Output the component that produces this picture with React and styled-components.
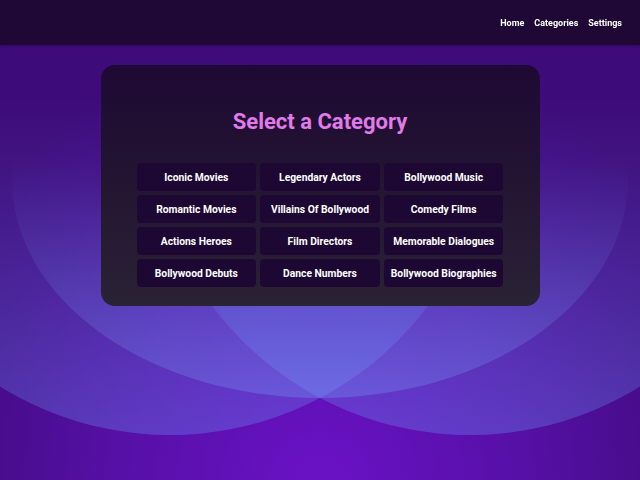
import React from 'react'
import styled, { createGlobalStyle } from 'styled-components'

const GlobalStyle = createGlobalStyle`
    html, body {
        margin: 0;
        padding: 0;
        height: 100%;
    }
    body {
        font-family: Roboto, "Liberation Sans", sans-serif;
        background: radial-gradient(ellipse 70% 90% at 50% 100%, #6a12c6 0%, #5610a6 45%, #440c86 80%, #3e0b7a 100%);
        background-color: #440c86;
        min-height: 480px;
        overflow: hidden;
    }
`

const Page = styled.div`
    position: relative;
    min-height: 480px;
    display: flex;
    flex-direction: column;
`

const Backdrop = styled.svg`
    position: fixed;
    left: 0;
    top: 0;
    width: 640px;
    height: 480px;
    z-index: 0;
    pointer-events: none;
`

const Header = styled.header`
    position: relative;
    z-index: 1;
    height: 45px;
    background-color: #1f0836;
    display: flex;
    align-items: center;
    justify-content: flex-end;
    padding-right: 18px;
    box-shadow: 0 1px 3px rgba(0, 0, 0, 0.25);
`

const Nav = styled.nav`
    display: flex;
    gap: 10px;
`

const NavLink = styled.a`
    color: #fff;
    font-size: 9px;
    font-weight: 700;
    text-decoration: none;
    cursor: pointer;
`

const Main = styled.main`
    position: relative;
    z-index: 1;
    display: flex;
    justify-content: center;
    padding-top: 20px;
`

const Card = styled.section`
    width: 439px;
    box-sizing: border-box;
    padding: 42px 36px 19px;
    border-radius: 14px;
    background: linear-gradient(to bottom, #1e0934 0%, #241532 50%, #2a2235 100%);
`

const Title = styled.h1`
    margin: 0 0 26px;
    text-align: center;
    font-size: 22px;
    line-height: 30px;
    font-weight: 700;
    color: #e07be9;
`

const Grid = styled.div`
    display: grid;
    grid-template-columns: repeat(3, 1fr);
    gap: 4px;
`

const CategoryButton = styled.button`
    height: 28px;
    border: none;
    border-radius: 4px;
    background-color: #1d0733;
    color: #fff;
    font-family: Roboto, "Liberation Sans", sans-serif;
    font-size: 10.3px;
    font-weight: 700;
    padding: 0;
    cursor: pointer;
    white-space: nowrap;
`

const categories = [
    'Iconic Movies', 'Legendary Actors', 'Bollywood Music',
    'Romantic Movies', 'Villains Of Bollywood', 'Comedy Films',
    'Actions Heroes', 'Film Directors', 'Memorable Dialogues',
    'Bollywood Debuts', 'Dance Numbers', 'Bollywood Biographies',
]

const Circles = () => (
    <Backdrop viewBox="0 0 640 480" preserveAspectRatio="none">
        <defs>
            <linearGradient id="sideFade" gradientUnits="userSpaceOnUse" x1="0" y1="90" x2="0" y2="435">
                <stop offset="0" stopColor="#6ea0ff" stopOpacity="0" />
                <stop offset="1" stopColor="#6ea0ff" stopOpacity="0.3" />
            </linearGradient>
            <linearGradient id="midFade" gradientUnits="userSpaceOnUse" x1="0" y1="160" x2="0" y2="398">
                <stop offset="0" stopColor="#78a8ff" stopOpacity="0" />
                <stop offset="1" stopColor="#78a8ff" stopOpacity="0.28" />
            </linearGradient>
        </defs>
        <circle cx="170" cy="113" r="322" fill="url(#sideFade)" />
        <circle cx="470" cy="113" r="322" fill="url(#sideFade)" />
        <ellipse cx="320" cy="180" rx="308" ry="218" fill="url(#midFade)" />
    </Backdrop>
)

const App = () => {
    return (
        <Page>
            <GlobalStyle />
            <Circles />
            <Header>
                <Nav>
                    <NavLink>Home</NavLink>
                    <NavLink>Categories</NavLink>
                    <NavLink>Settings</NavLink>
                </Nav>
            </Header>
            <Main>
                <Card>
                    <Title>Select a Category</Title>
                    <Grid>
                        {categories.map((c) => (
                            <CategoryButton key={c}>{c}</CategoryButton>
                        ))}
                    </Grid>
                </Card>
            </Main>
        </Page>
    )
}

export default App
